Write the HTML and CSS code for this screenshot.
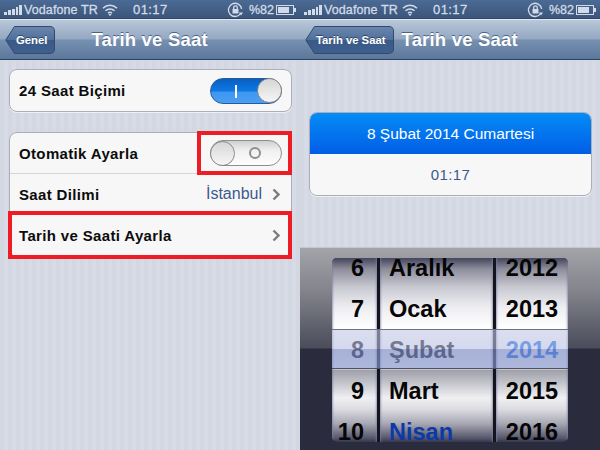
FILE: index.html
```html
<!DOCTYPE html>
<html lang="tr">
<head>
<meta charset="utf-8">
<title>Tarih ve Saat</title>
<link rel="stylesheet" href="styles.css">
</head>
<body>
<div class="screens">
  <section class="pane">
    <div class="status">
      <svg class="signal" width="18" height="10" viewBox="0 0 18 10"><path d="M0 7h3v3H0zM4 5h3v5H4zM8 4h3v6H8zM12 2h2v8h-2zM15 0h3v10h-3z"/></svg>
      <span class="carrier">Vodafone TR</span>
      <svg class="wifi" width="16" height="12" viewBox="0 0 16 12"><path d="M1 4.2a10 10 0 0 1 14 0M3.5 6.8a6.5 6.5 0 0 1 9 0M6 9.2a3 3 0 0 1 4 0"/><path class="wifi-dot" d="M8 12l-1.6-1.6a2.3 2.3 0 0 1 3.2 0z"/></svg>
      <span class="clock">01:17</span>
      <svg class="rotlock" width="17" height="16" viewBox="0 0 17 16"><path class="ring" d="M13.6 11.5A6.6 6.6 0 1 1 14.6 7"/><path class="arrow" d="M12 10.5h4l-2 3z"/><path class="lock" d="M5.5 7h6v4.5h-6z"/><path class="shackle" d="M6.7 7V5.6a1.8 1.8 0 0 1 3.6 0V7"/></svg>
      <span class="percent">%82</span>
      <span class="battery"><span class="battery-level"></span></span>
    </div>
    <nav class="nav">
      <span class="back"><svg class="back-tip" width="11" height="28" viewBox="0 0 11 28"><defs><linearGradient id="tipA" x1="0" y1="0" x2="0" y2="1"><stop offset="0" stop-color="#6a86ac"/><stop offset=".5" stop-color="#4f6f9b"/><stop offset=".51" stop-color="#395a89"/><stop offset="1" stop-color="#3f5f8d"/></linearGradient></defs><path fill="url(#tipA)" d="M11 .5H9.5L.8 14l8.7 13.5H11z"/></svg><span class="back-body">Genel</span></span>
      <h1 class="title title-main">Tarih ve Saat</h1>
    </nav>
    <main class="content content-left">
      <div class="card">
        <div class="row">
          <span class="label">24 Saat Biçimi</span>
          <span class="toggle toggle-on"><span class="mark-i"></span><span class="knob"></span></span>
        </div>
      </div>
      <div class="card">
        <div class="row row-line">
          <span class="label">Otomatik Ayarla</span>
          <span class="toggle toggle-off"><span class="knob"></span><span class="mark-o"></span></span>
        </div>
        <div class="row row-line">
          <span class="label">Saat Dilimi</span>
          <span class="value">İstanbul</span>
          <svg class="chev" width="9" height="13" viewBox="0 0 9 13"><path d="M1.5 1.5l5 5-5 5"/></svg>
        </div>
        <div class="row">
          <span class="label">Tarih ve Saati Ayarla</span>
          <svg class="chev" width="9" height="13" viewBox="0 0 9 13"><path d="M1.5 1.5l5 5-5 5"/></svg>
        </div>
      </div>
      <span class="mark mark-toggle"></span>
      <span class="mark mark-row"></span>
    </main>
  </section>

  <section class="pane">
    <div class="status">
      <svg class="signal" width="18" height="10" viewBox="0 0 18 10"><path d="M0 7h3v3H0zM4 5h3v5H4zM8 4h3v6H8zM12 2h2v8h-2zM15 0h3v10h-3z"/></svg>
      <span class="carrier">Vodafone TR</span>
      <svg class="wifi" width="16" height="12" viewBox="0 0 16 12"><path d="M1 4.2a10 10 0 0 1 14 0M3.5 6.8a6.5 6.5 0 0 1 9 0M6 9.2a3 3 0 0 1 4 0"/><path class="wifi-dot" d="M8 12l-1.6-1.6a2.3 2.3 0 0 1 3.2 0z"/></svg>
      <span class="clock">01:17</span>
      <svg class="rotlock" width="17" height="16" viewBox="0 0 17 16"><path class="ring" d="M13.6 11.5A6.6 6.6 0 1 1 14.6 7"/><path class="arrow" d="M12 10.5h4l-2 3z"/><path class="lock" d="M5.5 7h6v4.5h-6z"/><path class="shackle" d="M6.7 7V5.6a1.8 1.8 0 0 1 3.6 0V7"/></svg>
      <span class="percent">%82</span>
      <span class="battery"><span class="battery-level"></span></span>
    </div>
    <nav class="nav">
      <span class="back"><svg class="back-tip" width="11" height="28" viewBox="0 0 11 28"><defs><linearGradient id="tipB" x1="0" y1="0" x2="0" y2="1"><stop offset="0" stop-color="#6a86ac"/><stop offset=".5" stop-color="#4f6f9b"/><stop offset=".51" stop-color="#395a89"/><stop offset="1" stop-color="#3f5f8d"/></linearGradient></defs><path fill="url(#tipB)" d="M11 .5H9.5L.8 14l8.7 13.5H11z"/></svg><span class="back-body">Tarih ve Saat</span></span>
      <h1 class="title title-side">Tarih ve Saat</h1>
    </nav>
    <main class="content content-right">
      <div class="card datecard">
        <div class="date-active">8 Şubat 2014 Cumartesi</div>
        <div class="date-time">01:17</div>
      </div>
    </main>
    <div class="pickerbar">
      <div class="picker">
        <div class="wheel wheel-day">
          <span class="item">6</span><span class="item">7</span><span class="item item-sel">8</span><span class="item">9</span><span class="item">10</span>
        </div>
        <div class="wheel wheel-month">
          <span class="item">Aralık</span><span class="item">Ocak</span><span class="item item-sel">Şubat</span><span class="item">Mart</span><span class="item item-now">Nisan</span>
        </div>
        <div class="wheel wheel-year">
          <span class="item">2012</span><span class="item">2013</span><span class="item item-now-sel">2014</span><span class="item">2015</span><span class="item">2016</span>
        </div>
        <span class="band"></span>
      </div>
    </div>
  </section>
</div>
</body>
</html>
```

FILE: styles.css
```css
* { box-sizing: border-box; }
html, body { margin: 0; padding: 0; }
body {
  width: 600px;
  height: 450px;
  overflow: hidden;
  font-family: "Liberation Sans", Arial, sans-serif;
}
.screens { display: flex; width: 600px; height: 450px; }
.pane {
  position: relative;
  width: 300px;
  height: 450px;
  display: flex;
  flex-direction: column;
  overflow: hidden;
  background-color: #d4d8e2;
}

/* status bar */
.status {
  height: 19px;
  flex: none;
  display: flex;
  align-items: center;
  padding: 0 3px 0 4px;
  color: #d3dbe8;
  font-size: 12px;
  background: linear-gradient(#4b6a94, #3a5579);
  box-shadow: inset 0 -1px 0 #2f4666;
}
.signal { fill: #d3dbe8; flex: none; }
.carrier { margin-left: 2px; width: 72px; font-size: 12.5px; letter-spacing: .1px; -webkit-text-stroke: .3px #d3dbe8; white-space: nowrap; }
.wifi { margin-left: 6px; flex: none; fill: none; stroke: #d3dbe8; stroke-width: 1.5; }
.wifi-dot { fill: #d3dbe8; stroke: none; }
.clock { margin-left: 15px; width: 49px; font-size: 13px; letter-spacing: .4px; -webkit-text-stroke: .3px #d3dbe8; }
.rotlock { margin-left: 45px; flex: none; fill: none; stroke: #d3dbe8; stroke-width: 1.3; }
.rotlock .arrow, .rotlock .lock { fill: #d3dbe8; stroke: none; }
.percent { margin-left: 5px; width: 27px; font-size: 12.5px; -webkit-text-stroke: .3px #d3dbe8; }
.battery {
  position: relative;
  width: 18px;
  height: 10px;
  border: 1px solid #d3dbe8;
  padding: 1px;
  flex: none;
}
.battery::after {
  content: "";
  position: absolute;
  right: -3px;
  top: 2px;
  width: 2px;
  height: 4px;
  background: #d3dbe8;
}
.battery-level { display: block; width: 82%; height: 100%; background: #d3dbe8; }

/* navigation bar */
.nav {
  height: 41px;
  flex: none;
  display: flex;
  align-items: center;
  padding: 0 0 0 5px;
  background: linear-gradient(#b9c8da 0, #94a8c1 48%, #7690b0 52%, #5b779b 100%);
  border-top: 1px solid #dfe6ef;
  border-bottom: 1px solid #2c4364;
}
.back { display: flex; height: 28px; flex: none; }
.back-tip { display: block; stroke: #35496a; stroke-width: 1; margin-right: -1px; flex: none; }
.back-body {
  display: flex;
  align-items: center;
  padding: 0 7px 0 1px;
  color: #fff;
  font-size: 11.3px;
  font-weight: bold;
  background: linear-gradient(#6a86ac, #4f6f9b 50%, #395a89 51%, #3f5f8d);
  border: 1px solid #35496a;
  border-left: 0;
  border-radius: 0 5px 5px 0;
  text-shadow: 0 -1px 0 #2f4464;
  white-space: nowrap;
}
.title {
  margin: 0;
  color: #fff;
  font-size: 18.5px;
  font-weight: bold;
  letter-spacing: .2px;
  text-shadow: 0 -1px 0 #4a6488;
  white-space: nowrap;
}
.title-main { margin-left: 36px; }
.title-side { margin-left: 8px; }

/* list background */
.content {
  position: relative;
  flex: 1;
  background-color: #d4d8e2;
  background-image: repeating-linear-gradient(90deg, #d3d7e1 0 4px, #d7dbe5 4px 8px);
}
.content-left { padding: 9px 8px 0 9px; display: flex; flex-direction: column; gap: 20px; }
.content-right { padding: 52px 8px 0 9px; flex: none; height: 187px; }

.card {
  background: #f7f7f7;
  border: 1px solid #a9aeb8;
  border-radius: 8px;
  box-shadow: 0 1px 0 #eef0f4;
  overflow: hidden;
}
.row {
  height: 41px;
  display: flex;
  align-items: center;
  padding: 0 9px 0 9px;
}
.row-line { border-bottom: 1px solid #d3d5d8; }
.label {
  flex: 1;
  color: #0c0c0c;
  font-size: 15px;
  font-weight: bold;
  letter-spacing: .35px;
  white-space: nowrap;
}
.value { color: #3c5a8e; font-size: 16px; margin-right: 10px; }
.chev { fill: none; stroke: #7b7b7b; stroke-width: 2.4; flex: none; margin-right: 1px; }

/* switches */
.toggle {
  position: relative;
  display: flex;
  align-items: center;
  width: 72px;
  height: 26px;
  border-radius: 13px;
  flex: none;
}
.toggle-on {
  justify-content: flex-end;
  background: linear-gradient(#0a5fc0 0, #0d78e6 50%, #3e97f0 55%, #4a9ff2 100%);
  border: 1px solid #2b5a96;
}
.toggle-off {
  background: linear-gradient(#d0d0d0 0, #f0f0f0 40%, #fdfdfd 100%);
  border: 1px solid #8e8e8e;
}
.knob {
  width: 25px;
  height: 25px;
  margin: -1px;
  border-radius: 50%;
  border: 1px solid #8a8a8a;
  background: linear-gradient(#d6d6d6, #f6f6f6);
  flex: none;
}
.mark-i { position: absolute; left: 24px; top: 6px; width: 2px; height: 13px; background: #fff; }
.mark-o {
  margin-left: 15px;
  width: 12px;
  height: 12px;
  border: 2px solid #8f8f8f;
  border-radius: 50%;
  flex: none;
}

/* red annotations */
.mark { position: absolute; border: 4px solid #ee1c25; }
.mark-toggle { left: 197px; top: 71px; width: 95px; height: 44px; }
.mark-row { left: 8px; top: 151px; width: 284px; height: 48px; }

/* date card */
.date-active {
  height: 41px;
  display: flex;
  align-items: center;
  justify-content: center;
  color: #fff;
  font-size: 15.5px;
  background: linear-gradient(#058cf6, #015ee6);
}
.date-time {
  height: 41px;
  display: flex;
  align-items: center;
  justify-content: center;
  color: #3c5a8e;
  font-size: 15px;
  letter-spacing: .4px;
}

/* picker */
.pickerbar {
  flex: 1;
  display: flex;
  justify-content: center;
  padding: 10px 0 9px;
  border-top: 1px solid #c4c6cc;
  background: linear-gradient(#a3a4a8 0, #85868e 40px, #4a4c5a 100px, #2a2c3e 101px, #2a2c3e 100%);
}
.picker {
  position: relative;
  width: 236px;
  height: 184px;
  display: flex;
  gap: 3px;
  background: #14141c;
  border-radius: 5px;
  overflow: hidden;
}
.wheel {
  height: 184px;
  display: flex;
  flex-direction: column;
  justify-content: center;
  overflow: hidden;
  background: linear-gradient(#44445a 0, #8d8d9c 6%, #c9c9d2 16%, #eeeef2 27%, #ffffff 38%, #ffffff 60%, #9fa0a8 61%, #c4c5cc 68%, #f0f0f3 76%, #dcdce2 82%, #a8a8b4 90%, #55556a 98%, #33334a 100%);
  box-shadow: inset 2px 0 2px -1px rgba(120,125,165,.7), inset -2px 0 2px -1px rgba(120,125,165,.7);
}
.wheel-day { width: 45px; }
.wheel-month { width: 113px; }
.wheel-year { width: 72px; }
.item {
  height: 41px;
  flex: none;
  display: flex;
  align-items: center;
  color: #060606;
  font-size: 23.5px;
  font-weight: bold;
  white-space: nowrap;
}
.wheel-day .item { justify-content: flex-end; padding-right: 13px; }
.wheel-month .item { padding-left: 9px; }
.wheel-year .item { justify-content: center; }
.item-sel { color: #0c0c14; }
.item-now { color: #0b3aa8; }
.item-now-sel { color: #1565ea; }
.band {
  position: absolute;
  left: 0;
  right: 0;
  top: 71px;
  height: 40px;
  border-top: 1px solid #6b7388;
  border-bottom: 1px solid #4b5166;
  background: linear-gradient(rgba(195,200,228,.6) 0, rgba(185,192,226,.6) 50%, rgba(125,140,195,.68) 50%, rgba(135,150,205,.68) 100%);
}
```
